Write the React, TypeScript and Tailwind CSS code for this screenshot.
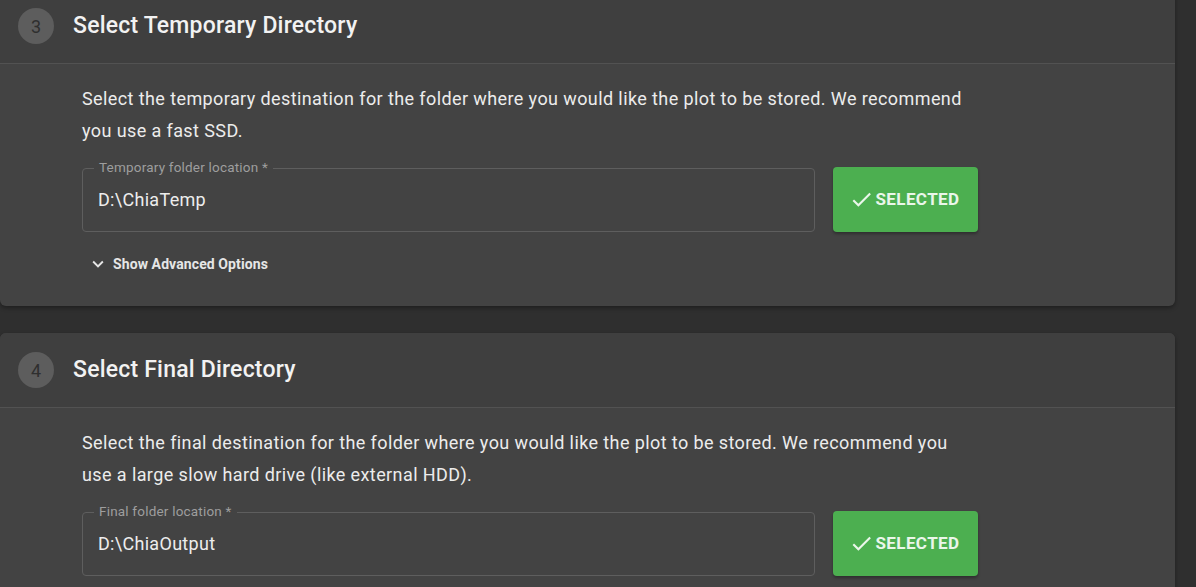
import React from "react";

function CheckIcon() {
  return (
    <svg viewBox="0 0 24 24" className="h-[25px] w-[25px] fill-current">
      <path d="M9 16.17L4.83 12l-1.42 1.41L9 19 21 7l-1.41-1.41z" />
    </svg>
  );
}

function ChevronDown() {
  return (
    <svg viewBox="0 0 24 24" className="h-[22px] w-[22px] fill-current">
      <path d="M16.59 8.59L12 13.17 7.41 8.59 6 10l6 6 6-6z" />
    </svg>
  );
}

type StepProps = {
  step: number;
  title: string;
  text: string;
  label: string;
  value: string;
  advanced?: boolean;
  className?: string;
};

function StepCard({ step, title, text, label, value, advanced, className }: StepProps) {
  return (
    <section
      className={`w-[1175px] rounded-md bg-[#434343] shadow-[0_2px_4px_rgba(0,0,0,0.35)] ${className ?? ""}`}
    >
      <header className="flex h-[74px] items-center gap-[19px] rounded-t-md bg-[#3f3f3f] px-[18px]">
        <div className="flex h-[36px] w-[36px] items-center justify-center rounded-full bg-[#5d5d5d] text-[18px] text-[#2f2f2f]">
          {step}
        </div>
        <h2 className="text-[23px] font-medium tracking-[0.2px] text-[#f2f2f2]">{title}</h2>
      </header>
      <div className="h-px bg-[#525252]" />
      <div className="pl-[82px] pt-[19px] pb-[31px]">
        <p className="w-[885px] text-[18px] leading-[32px] tracking-[0.4px] text-[#ececec]">{text}</p>
        <div className="mt-[20px] flex items-center gap-[18px]">
          <div className="relative flex h-[64px] w-[733px] items-center rounded-[4px] border border-[#5e5e5e] px-[15px]">
            <span className="absolute -top-[11px] left-[11px] bg-[#434343] px-[5px] text-[13.5px] leading-[18px] tracking-[0.2px] text-[#9e9e9e]">
              {label} *
            </span>
            <span className="text-[18px] tracking-[0.3px] text-[#ededed]">{value}</span>
          </div>
          <button className="flex h-[65px] w-[145px] items-center justify-center gap-[1px] rounded-[4px] bg-[#4caf50] pr-[2px] text-[17px] font-bold uppercase tracking-[0.4px] text-[#eaf6ea] shadow-[0_2px_3px_rgba(0,0,0,0.3)]">
            <CheckIcon />
            Selected
          </button>
        </div>
        {advanced && (
          <div className="mt-[21px] flex items-center gap-[4px] pl-[5px] text-[14px] font-bold tracking-[0.1px] text-[#e6e6e6]">
            <ChevronDown />
            Show Advanced Options
          </div>
        )}
      </div>
    </section>
  );
}

export default function App() {
  return (
    <main className="h-[587px] overflow-hidden bg-[#2f2f2f] font-['Roboto',sans-serif]">
      <StepCard
        className="-mt-[11px]"
        step={3}
        title="Select Temporary Directory"
        text="Select the temporary destination for the folder where you would like the plot to be stored. We recommend you use a fast SSD."
        label="Temporary folder location"
        value="D:\ChiaTemp"
        advanced
      />
      <StepCard
        className="mt-[27px]"
        step={4}
        title="Select Final Directory"
        text="Select the final destination for the folder where you would like the plot to be stored. We recommend you use a large slow hard drive (like external HDD)."
        label="Final folder location"
        value="D:\ChiaOutput"
      />
    </main>
  );
}
